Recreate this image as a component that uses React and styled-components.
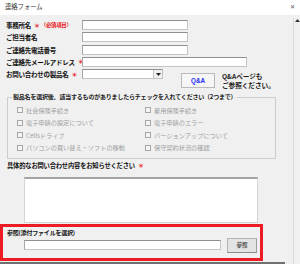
import React from "react";
import styled, { createGlobalStyle } from "styled-components";

const GlobalStyle = createGlobalStyle`
  html, body {
    margin: 0;
    padding: 0;
    background: #f0f0f0;
  }
  body {
    font-family: "Noto Sans CJK JP", "Noto Sans", sans-serif;
    color: #1a1a1a;
  }
  * {
    box-sizing: border-box;
  }
`;

const LEFT_OPTIONS = [
  "社会保険手続き",
  "電子申請の設定について",
  "Cellsドライブ",
  "パソコンの買い替え・ソフトの移動",
];
const RIGHT_OPTIONS = [
  "雇用保険手続き",
  "電子申請のエラー",
  "バージョンアップについて",
  "保守契約状況の確認",
];

const App = () => {
  const options = [];
  for (let i = 0; i < LEFT_OPTIONS.length; i++) {
    options.push(LEFT_OPTIONS[i], RIGHT_OPTIONS[i]);
  }

  return (
    <>
      <GlobalStyle />
      <Window>
        <TitleBar>
          <Title>連絡フォーム</Title>
          <Close>✕</Close>
        </TitleBar>
        <Body>
          <Content>
            <Fields>
              <FieldRow>
                <Label>
                  事務所名<Required>＊</Required>
                  <RequiredNote>（必須項目）</RequiredNote>
                </Label>
                <TextInput width={106} />
              </FieldRow>
              <FieldRow>
                <Label>ご担当者名</Label>
                <TextInput width={106} />
              </FieldRow>
              <FieldRow>
                <Label>ご連絡先電話番号</Label>
                <TextInput width={106} />
              </FieldRow>
              <FieldRow>
                <Label>
                  ご連絡先メールアドレス<Required>＊</Required>
                </Label>
                <TextInput width={165} />
              </FieldRow>
              <ProductRow>
                <Label>
                  お問い合わせの製品名<Required>＊</Required>
                </Label>
                <Select>
                  <SelectArrow>
                    <svg width="5" height="3" viewBox="0 0 5 3">
                      <path d="M0 0h5L2.5 3z" fill="#222" />
                    </svg>
                  </SelectArrow>
                </Select>
                <QaButton>Q&amp;A</QaButton>
                <QaNote>
                  Q&amp;Aページも
                  <br />
                  ご参照ください。
                </QaNote>
              </ProductRow>
            </Fields>

            <Group>
              <Legend>
                製品名を選択後、該当するものがありましたらチェックを入れてください（2つまで）
              </Legend>
              <CheckGrid>
                {options.map((text) => (
                  <CheckItem key={text}>
                    <CheckBox />
                    {text}
                  </CheckItem>
                ))}
              </CheckGrid>
            </Group>

            <DetailLabel>
              具体的なお問い合わせ内容をお知らせください<Required>＊</Required>
            </DetailLabel>
            <TextArea />

            <AttachBox>
              <AttachLabel>参照(添付ファイルを選択)</AttachLabel>
              <AttachRow>
                <TextInput width={197} />
                <BrowseButton>参照</BrowseButton>
              </AttachRow>
            </AttachBox>
            <BottomEdge />
          </Content>
          <ScrollBar>
            <svg width="5" height="3" viewBox="0 0 5 3">
              <path d="M2.5 0L5 3H0z" fill="#333" />
            </svg>
          </ScrollBar>
        </Body>
      </Window>
    </>
  );
};
export default App;

const Window = styled.div`
  width: 300px;
  height: 264px;
  overflow: hidden;
  display: flex;
  flex-direction: column;
  background: #f0f0f0;
`;

const TitleBar = styled.div`
  height: 15px;
  flex: none;
  background: #ffffff;
  display: flex;
  align-items: center;
  justify-content: space-between;
  padding: 0 5px 0 5px;
`;

const Title = styled.span`
  font-size: 6.3px;
  color: #333;
  line-height: 1;
`;

const Close = styled.span`
  font-family: "DejaVu Sans", sans-serif;
  font-size: 6px;
  color: #555;
  line-height: 1;
  margin-top: -2px;
`;

const Body = styled.div`
  flex: 1;
  display: flex;
  min-height: 0;
`;

const Content = styled.div`
  width: 293px;
  flex: none;
  display: flex;
  flex-direction: column;
`;

const ScrollBar = styled.div`
  flex: 1;
  border-left: 1px solid #dadada;
  margin-top: 3px;
  display: flex;
  justify-content: center;
  padding-top: 1px;
  svg {
    display: block;
  }
`;

const Fields = styled.div`
  display: flex;
  flex-direction: column;
  padding: 5px 0 0 6px;
`;

const FieldRow = styled.div`
  height: 12.3px;
  display: flex;
  align-items: flex-start;
`;

const ProductRow = styled(FieldRow)`
  height: auto;
`;

const Label = styled.div`
  width: 76px;
  flex: none;
  height: 10px;
  display: flex;
  align-items: center;
  font-size: 6.5px;
  font-weight: 700;
  color: #111;
  white-space: nowrap;
  letter-spacing: -0.25px;
`;

const Required = styled.span`
  color: #e8141c;
  font-size: 6px;
  margin-left: 3px;
`;

const RequiredNote = styled.span`
  color: #e8141c;
  font-size: 5.4px;
  margin-left: 1px;
`;

const TextInput = styled.div`
  width: ${(props) => props.width}px;
  height: 10px;
  flex: none;
  background: #ffffff;
  border: 1px solid #c4c4c4;
  border-top-color: #8f8f8f;
  border-left-color: #a8a8a8;
`;

const Select = styled(TextInput)`
  width: 81px;
  height: 10px;
  display: flex;
  justify-content: flex-end;
`;

const SelectArrow = styled.div`
  width: 9px;
  height: 8px;
  background: #f0f0f0;
  border-left: 1px solid #c4c4c4;
  display: flex;
  align-items: center;
  justify-content: center;
  svg {
    display: block;
  }
`;

const QaButton = styled.div`
  width: 34px;
  height: 15px;
  margin: 4px 0 0 18px;
  flex: none;
  background: #f6f6f6;
  border: 1px solid #b9b9b9;
  display: flex;
  align-items: center;
  justify-content: center;
  font-family: "Liberation Sans", sans-serif;
  font-size: 6.3px;
  font-weight: 700;
  color: #1c2bf0;
`;

const QaNote = styled.div`
  margin: 3px 0 0 7px;
  font-size: 6.6px;
  line-height: 8.5px;
  font-weight: 600;
  color: #1a1a1a;
  white-space: nowrap;
`;

const Group = styled.fieldset`
  margin: 4px 0 0 7px;
  width: 269px;
  padding: 3px 0 4px 9px;
  border: 1px solid #cdcdcd;
  min-width: 0;
`;

const Legend = styled.legend`
  margin-left: -5px;
  padding: 0 1px;
  font-size: 6px;
  line-height: 8px;
  font-weight: 700;
  color: #222;
  white-space: nowrap;
  letter-spacing: -0.2px;
`;

const CheckGrid = styled.div`
  display: grid;
  grid-template-columns: 128px 1fr;
  grid-auto-rows: 12.4px;
`;

const CheckItem = styled.div`
  display: flex;
  align-items: center;
  gap: 3px;
  font-size: 6.2px;
  color: #a0a0a0;
  white-space: nowrap;
`;

const CheckBox = styled.span`
  width: 6px;
  height: 6px;
  flex: none;
  border: 1px solid #a8a8a8;
  background: #f4f4f4;
`;

const DetailLabel = styled.div`
  margin: 3px 0 0 7px;
  height: 8px;
  display: flex;
  align-items: center;
  font-size: 6.3px;
  font-weight: 700;
  color: #111;
  white-space: nowrap;
  letter-spacing: -0.2px;
`;

const TextArea = styled.div`
  margin: 7px 0 0 24px;
  width: 234px;
  height: 46px;
  background: #ffffff;
  border: 1px solid #d4d4d4;
  border-top: 2px solid #a4a4a4;
`;

const AttachBox = styled.div`
  margin-top: 1px;
  width: 263px;
  height: 37px;
  border: 3.5px solid #ec1c24;
  padding: 1px 2px 0 4px;
  display: flex;
  flex-direction: column;
`;

const AttachLabel = styled.div`
  height: 10px;
  display: flex;
  align-items: center;
  font-size: 6px;
  font-weight: 700;
  color: #111;
  white-space: nowrap;
  letter-spacing: -0.2px;
`;

const AttachRow = styled.div`
  height: 15px;
  display: flex;
  align-items: center;
  gap: 6px;
  padding-left: 17px;
`;

const BrowseButton = styled.div`
  width: 30px;
  height: 15px;
  flex: none;
  background: #e3e3e3;
  border: 1px solid #b4b4b4;
  border-bottom-color: #8c8c8c;
  border-right-color: #9c9c9c;
  display: flex;
  align-items: center;
  justify-content: center;
  font-size: 5.5px;
  font-weight: 700;
  color: #555;
`;

const BottomEdge = styled.div`
  margin-top: 1px;
  width: 285px;
  height: 2px;
  background: #6f6f6f;
`;
